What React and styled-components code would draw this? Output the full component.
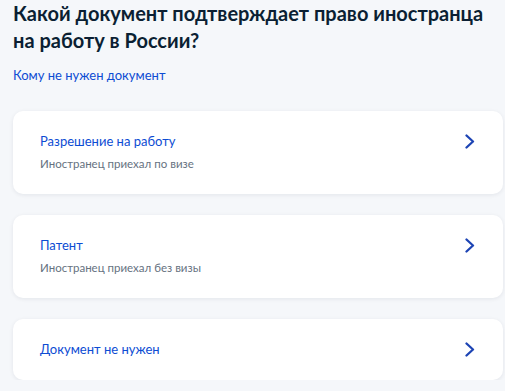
import styled, { createGlobalStyle } from "styled-components";

const GlobalStyle = createGlobalStyle`
  html, body {
    margin: 0;
    padding: 0;
    background: #f5f7fa;
  }
  body {
    font-family: Lato, "Noto Sans", sans-serif;
    color: #0b1f33;
  }
`;

const Page = styled.div`
  padding: 0 2px 0 13px;
`;

const Title = styled.h1`
  margin: 0;
  font-size: 20px;
  line-height: 27px;
  font-weight: 700;
  color: #0b1f33;
`;

const HelpLink = styled.a`
  display: inline-block;
  margin-top: 11px;
  font-size: 13px;
  line-height: 20px;
  color: #0d4cd3;
  text-decoration: none;
`;

const List = styled.div`
  display: flex;
  flex-direction: column;
  gap: 21px;
  margin-top: 26px;
`;

const Card = styled.a`
  display: flex;
  align-items: flex-start;
  justify-content: space-between;
  padding: 20px 28px 21px 27px;
  background: #fff;
  border-radius: 10px;
  box-shadow: 0 1px 4px rgba(11, 31, 51, 0.08);
  text-decoration: none;
`;

const CardText = styled.div`
  display: flex;
  flex-direction: column;
  gap: 4px;
`;

const CardTitle = styled.div`
  font-size: 13px;
  line-height: 20px;
  color: #0d4cd3;
`;

const CardHint = styled.div`
  font-size: 11.5px;
  line-height: 18px;
  color: #66727f;
`;

const Chevron = styled.svg`
  flex-shrink: 0;
  margin-top: 3px;
`;

const items = [
  { title: "Разрешение на работу", hint: "Иностранец приехал по визе" },
  { title: "Патент", hint: "Иностранец приехал без визы" },
  { title: "Документ не нужен" },
];

function Option({ item }) {
  return (
    <Card href="#">
      <CardText>
        <CardTitle>{item.title}</CardTitle>
        {item.hint && <CardHint>{item.hint}</CardHint>}
      </CardText>
      <Chevron width="10" height="15" viewBox="0 0 10 15">
        <path
          d="M1.5 1.5 L8 7.5 L1.5 13.5"
          fill="none"
          stroke="#1d44b4"
          strokeWidth="2.3"
          strokeLinecap="round"
          strokeLinejoin="round"
        />
      </Chevron>
    </Card>
  );
}

export default function App() {
  return (
    <Page>
      <GlobalStyle />
      <Title>
        Какой документ подтверждает право иностранца на работу в России?
      </Title>
      <HelpLink href="#">Кому не нужен документ</HelpLink>
      <List>
        {items.map((item) => (
          <Option key={item.title} item={item} />
        ))}
      </List>
    </Page>
  );
}
